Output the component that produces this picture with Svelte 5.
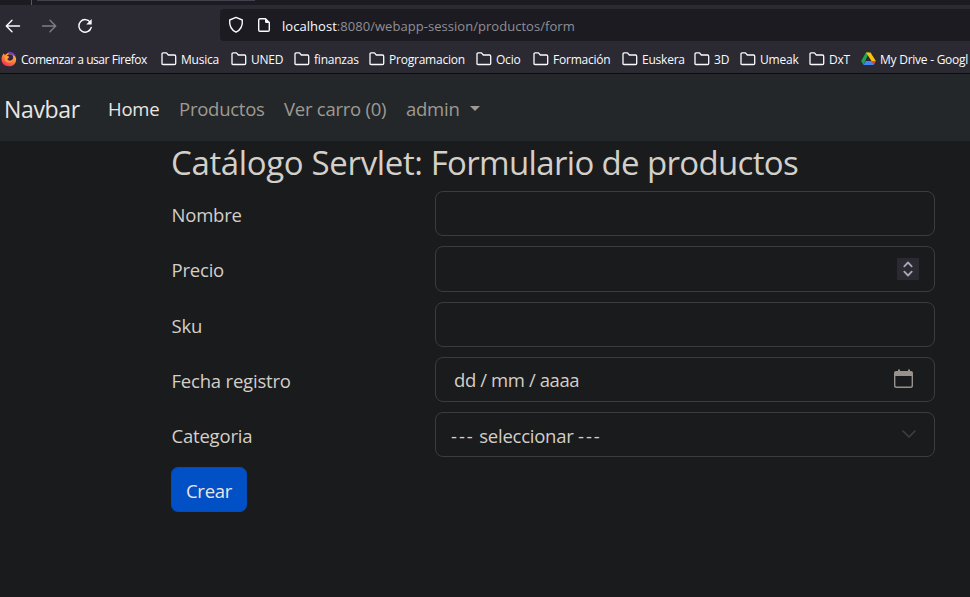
<script>
  const bookmarks = [
    { label: 'Musica', width: 70 },
    { label: 'UNED', width: 63 },
    { label: 'finanzas', width: 75 },
    { label: 'Programacion', width: 107 },
    { label: 'Ocio', width: 57 },
    { label: 'Formación', width: 89 },
    { label: 'Euskera', width: 72 },
    { label: '3D', width: 46 },
    { label: 'Umeak', width: 69 },
    { label: 'DxT', width: 52 }
  ];
</script>

<div class="window">
  <div class="tabs"><span class="divider"></span><span class="tab"></span></div>
  <header class="toolbar">
    <div class="buttons">
      <svg width="16" height="16" viewBox="0 0 16 16"><path d="M14.500 8H1.500M7 2.300 1.300 8 7 13.700" /></svg>
      <svg class="dim" width="16" height="16" viewBox="0 0 16 16"><path d="M1.500 8h13M9 2.300 14.700 8 9 13.700" /></svg>
      <svg width="16" height="16" viewBox="0 0 16 16"><path d="M13.300 4.300A6.300 6.300 0 1 0 14.200 9.500" /><path class="solid" d="M14.700 1v5.500H9.200z" /></svg>
    </div>
    <div class="address">
      <svg width="16" height="18" viewBox="0 0 16 18"><path d="M8 1.400 14.300 4c.5 5.400-1.300 9.700-6.300 12.200C3 13.700 1.200 9.400 1.700 4z" /></svg>
      <svg class="page" width="14" height="16" viewBox="0 0 14 16"><path d="M3 1.700h5.500L12.300 5.500V13q0 1.300-1.300 1.300H3Q1.700 14.300 1.700 13V3Q1.700 1.700 3 1.700z" /><path class="solid" d="M8 1.500 12.500 6H9.300Q8 6 8 4.700z" /></svg>
      <span class="url"><b>localhost</b>:8080/webapp-session/productos/form</span>
    </div>
  </header>
  <div class="bookmarks">
    <div class="mark firefox">
      <svg width="16" height="16" viewBox="0 0 16 16">
        <defs><linearGradient id="flame" x1=".8" y1="0" x2=".25" y2="1"><stop offset="0" stop-color="#ffd83d" /><stop offset=".45" stop-color="#ff8a35" /><stop offset="1" stop-color="#f52861" /></linearGradient></defs>
        <path class="shape" fill="url(#flame)" d="M2.500 2.500 4 4l2-1.500L9 1l4 2.200 2 3.800c.8 4.800-2.300 8.300-7 8.300S.5 12 .5 8.300C.5 5.900 1.500 4 2.500 2.500z" />
        <path class="shape" fill="#7438cb" d="M7.500.7C12 .3 15 3.500 15.200 7 13.500 5.200 12 3 7.500 3z" />
        <circle class="shape" cx="8.900" cy="6.600" r="3.300" fill="#372548" />
        <path class="shape" fill="#ff9d35" d="M4 4.600 7.500 5 8 6.500 6.300 8.200c1 2.300 4.700 2 6-.8 0 5.500-8.300 5-8.800.5z" />
      </svg>
      <span>Comenzar a usar Firefox</span>
    </div>
    {#each bookmarks as item}
      <div class="mark" style:width="{item.width}px">
        <svg width="16" height="14" viewBox="0 0 16 14"><path d="M1 11.700V2Q1 .9 2.100.9H5.500L7.300 3h6.200q1.200 0 1.200 1.200v7.200q0 1.100-1.200 1.100H2.100Q1 12.500 1 11.700z" /></svg>
        <span>{item.label}</span>
      </div>
    {/each}
    <div class="mark drive">
      <svg width="15" height="14" viewBox="0 0 15 14">
        <path class="shape" fill="#20a452" d="M5 .6h3L2.500 13 .2 9z" />
        <path class="shape" fill="#ffc107" d="M5 .6h4.500L14.800 9h-4.300z" />
        <path class="shape" fill="#4285f4" d="M4.700 9h10L12.500 13h-10z" />
        <path class="shape" fill="#ea4335" d="M10.500 9h4.300l-2.300 4z" />
        <path class="shape" fill="#2b2a33" d="M7.300 5 9.500 9H5.200z" />
      </svg>
      <span>My Drive - Googl</span>
    </div>
  </div>

  <nav>
    <span class="brand">Navbar</span>
    <span class="link home">Home</span>
    <span class="link products">Productos</span>
    <span class="link cart">Ver carro (0)</span>
    <span class="link admin">admin</span>
    <i class="caret"></i>
  </nav>

  <main>
    <h3><span class="site">Catálogo Servlet:</span> <span>Formulario de productos</span></h3>
    <div class="row"><span class="label">Nombre</span><div class="field"></div></div>
    <div class="row tall">
      <span class="label">Precio</span>
      <div class="field">
        <span class="stepper"><svg width="22" height="22" viewBox="0 0 22 22"><path d="m7.300 8.300 3.700-3.800 3.700 3.800M7.300 13.700l3.700 3.800 3.700-3.800" /></svg></span>
      </div>
    </div>
    <div class="row"><span class="label">Sku</span><div class="field"></div></div>
    <div class="row low">
      <span class="label">Fecha registro</span>
      <div class="field date">
        <span>dd / mm / aaaa</span>
        <svg width="20" height="20" viewBox="0 0 20 20"><path class="head" d="M0 7V4q0-2 2-2h2V.5h2V2h8V.5h2V2h1q2 0 2 2v3z" /><path d="M.7 6v10.500q0 1.800 1.800 1.800h14q1.800 0 1.800-1.800V6" /></svg>
      </div>
    </div>
    <div class="row low">
      <span class="label">Categoria</span>
      <div class="field select">
        <span><span class="dashes">---</span> seleccionar <span class="dashes">---</span></span>
        <svg width="14" height="9" viewBox="0 0 14 9"><path d="m1 1 6 6 6-6" /></svg>
      </div>
    </div>
    <button>Crear</button>
  </main>
</div>

<style>
  :global(body) { margin: 0; background: #1a1b1d; overflow: hidden; }
  * { box-sizing: border-box; }
  .window { width: 970px; height: 597px; overflow: hidden; background: #1a1b1d; font-family: "Open Sans", "Noto Sans", sans-serif; color: #d3cfc9; display: flex; flex-direction: column; }
  span { white-space: nowrap; }
  svg { display: block; flex: none; fill: none; stroke: #fbfbfe; stroke-width: 1.4; stroke-linejoin: round; stroke-linecap: round; }
  .solid { fill: #fbfbfe; stroke: none; }
  .shape { stroke: none; }
  .tabs { height: 5px; flex: none; background: #1c1b22; display: flex; }
  .divider { width: 1px; height: 5px; margin-left: 31px; background: #5a5961; }
  .tab { width: 218px; height: 1px; margin-left: 5px; background: #42414d; }
  .toolbar { height: 40px; flex: none; background: #2b2a33; display: flex; align-items: flex-start; padding-top: 4px; }
  .buttons { width: 220px; display: flex; gap: 20px; padding: 9px 0 0 5px; }
  .dim { opacity: .4; }
  .address { height: 32px; flex: 1; border-radius: 4px 0 0 4px; background: #1c1b22; display: flex; align-items: center; padding-left: 8px; }
  .page { margin-left: 13px; }
  .url { margin-left: 11px; font-size: 13px; color: #8f8f95; letter-spacing: .04px; line-height: 20px; padding-top: 2px; }
  .url b { font-weight: 400; color: #fbfbfe; }
  .bookmarks { height: 29px; flex: none; background: #2b2a33; border-bottom: 1px solid #0d0c10; display: flex; align-items: center; padding-top: 2px; font-size: 12px; color: #fbfbfe; }
  .mark { display: flex; align-items: center; gap: 4px; flex: none; line-height: 18px; letter-spacing: -.22px; }
  .mark svg { stroke-width: 1.3; margin-top: -2px; }
  .firefox { width: 161px; padding-left: 1px; letter-spacing: -.45px; }
  .drive { letter-spacing: -.25px; }
  nav { height: 67px; flex: none; background: #242729; color: #9e9a93; display: flex; align-items: center; padding: 2px 0 0 4px; font-size: 18.500px; }
  .brand { width: 104px; font-size: 23px; color: #e8e6e3; letter-spacing: -.35px; }
  .home { width: 71px; color: #e8e6e3; }
  .products { width: 105px; }
  .cart { width: 122px; }
  .admin { width: 64px; }
  .link { letter-spacing: -.25px; }
  .caret { border: 5px solid transparent; border-top-color: #9e9a93; border-bottom: 0; }
  main { width: 764px; margin-left: 171px; }
  h3 { height: 50px; margin: 0; font-size: 33px; font-weight: 400; line-height: 44px; letter-spacing: -.65px; }
  .site { letter-spacing: -.35px; }
  .row { height: 45px; margin-bottom: 10px; display: flex; align-items: center; font-size: 18.500px; letter-spacing: -.2px; }
  .tall { height: 46px; }
  .label { width: 264px; padding: 1px 0 0 .5px; }
  .low .label { padding-top: 2px; }
  .field { width: 500px; height: 100%; border: 1px solid #393d40; border-radius: 8px; display: flex; align-items: center; justify-content: space-between; padding: 0 15px; }
  .stepper { background: #2b2a33; margin-left: auto; }
  .stepper svg { stroke: #aaa8b3; stroke-width: 1.8; }
  .date { padding: 0 20px 0 18px; letter-spacing: -.4px; }
  .date svg { stroke: #98928a; margin-top: -1px; }
  .head { fill: #98928a; stroke: none; }
  .select { padding-right: 18px; letter-spacing: -.25px; }
  .select > span { padding-top: 1px; }
  .dashes { letter-spacing: 1.95px; }
  .select svg { stroke: #394147; stroke-width: 1.600; }
  button { display: block; width: 76px; height: 45px; padding: 2px 0 0; border: 1px solid #024bb8; border-radius: 7px; background: #0250c5; color: #e8e6e3; font: 18.500px "Open Sans", sans-serif; letter-spacing: -.3px; }
</style>
